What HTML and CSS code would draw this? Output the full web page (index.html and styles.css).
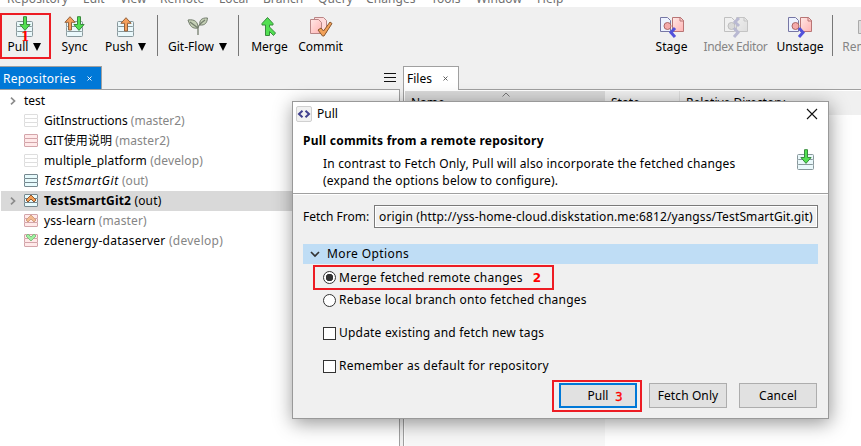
FILE: index.html
```html
<!DOCTYPE html>
<html lang="en">
<head>
<meta charset="utf-8">
<title>Pull</title>
<link rel="stylesheet" href="styles.css">
</head>
<body>
<svg class="defs" width="0" height="0" aria-hidden="true">
  <defs>
    <linearGradient id="pink" x2="1" y2="1"><stop stop-color="#ffe8e6"/><stop offset="1" stop-color="#ffb3b3"/></linearGradient>
    <symbol id="stack" viewBox="0 0 22 22">
      <g fill="#eaf8fb" stroke="#87979b"><rect x="2.500" y="5.500" width="16" height="6" rx="1"/><rect x="2.500" y="10.500" width="16" height="6" rx="1"/><rect x="2.500" y="15.500" width="16" height="5" rx="1"/></g>
    </symbol>
    <symbol id="down" viewBox="0 0 12 16"><path d="M4.500.7h3v7.800h3.600L6 14.400.9 8.500h3.600z" fill="#52e052" stroke="#388a3d"/></symbol>
    <symbol id="up" viewBox="0 0 12 16"><path d="M4.500 14h3V6.300h3.600L6 .7.900 6.300h3.600z" fill="#f5a05c" stroke="#94623c"/></symbol>
    <symbol id="pull" viewBox="0 0 22 22"><use href="#stack" width="22" height="22"/><use href="#down" x="5" width="12" height="16"/></symbol>
    <symbol id="pages" viewBox="0 0 26 22">
      <path d="M1.500 1.500h7l3 3v11h-10z" fill="#edf2ff" stroke="#7777a5"/><path d="M13.500 1.500h8l3 3v11h-11z" fill="url(#pink)" stroke="#b87575"/><path d="M21 1v4h4" fill="none" stroke="#b87575"/><circle cx="8.500" cy="10" r="3.500" fill="#f5aaaa" stroke="#a66"/>
    </symbol>
    <symbol id="repo" viewBox="0 0 16 14"><rect x="1.500" y=".5" width="13" height="4" rx=".5"/><rect x="1.500" y="4.500" width="13" height="4" rx=".5"/><rect x="1.500" y="8.500" width="13" height="4" rx=".5"/></symbol>
  </defs>
</svg>
<div class="app">
  <nav class="menu"><span class="m1">Repository</span><span class="m2">Edit</span><span class="m3">View</span><span class="m4">Remote</span><span class="m5">Local</span><span class="m6">Branch</span><span class="m7">Query</span><span class="m8">Changes</span><span class="m9">Tools</span><span class="m10">Window</span><span class="m11">Help</span></nav>
  <header class="toolbar">
    <div class="tool pull marked"><svg width="22" height="22"><use href="#pull"/></svg><span>Pull <i class="caret"></i></span><b class="mark one">1</b></div>
    <div class="tool sync"><svg width="22" height="22"><use href="#stack"/><use href="#up" x="0" y="0" width="12" height="16"/><use href="#down" x="9" y="0" width="12" height="16"/></svg><span>Sync</span></div>
    <div class="tool push"><svg width="22" height="22"><use href="#stack"/><use href="#up" x="5" y="1" width="12" height="16"/></svg><span>Push <i class="caret"></i></span></div>
    <div class="rule"></div>
    <div class="tool flow"><svg width="22" height="22" fill="#c4cfb5" stroke="#737d6d"><path d="M1 4c7-1 10 2 10 8C5 13 3 10 1 4z"/><path d="M20.500 2c-6-.5-8.500 2.500-7.500 7 5 .5 7-2 7.500-7z"/><path d="M3 6l8 6v7m0-7q0-3 7-8" fill="none" stroke-width="1.300"/></svg><span>Git-Flow <i class="caret"></i></span></div>
    <div class="rule"></div>
    <div class="tool merge"><svg width="22" height="22"><path d="M6.500 19.500V9H3v-1.500L8.500 1.500l5.500 6V9h-3.500v2l6 6-2 2.500-4-4v4z" fill="#52e052" stroke="#388a3d"/></svg><span>Merge</span></div>
    <div class="tool commit"><svg width="24" height="22"><path d="M5.500 1.500h9l3 3v12h-12z" fill="#ffdada" stroke="#b98686"/><path d="M1.500 3.500h8l3 3v11h-11z" fill="url(#pink)" stroke="#b98686"/><path d="M9 14l3-2 2.500 3L21 6l2 1.500L15 20h-1.500z" fill="#f2a158" stroke="#87572f"/></svg><span>Commit</span></div>
    <div class="spring"></div>
    <div class="tool stage"><svg width="26" height="22"><use href="#pages"/><path d="M16 12l-4 4.500 4 4.500" fill="none" stroke="#5252db" stroke-width="3"/></svg><span>Stage</span></div>
    <div class="tool index off"><svg width="26" height="22"><g class="gray"><use href="#pages"/></g><path d="M16 2l-4 4 4 4M11 12l4 4.500-4 4.500" fill="none" stroke="#b9b9d2" stroke-width="3"/></svg><span>Index Editor</span></div>
    <div class="tool unstage"><svg width="26" height="22"><use href="#pages"/><path d="M12 12l4 4.500-4 4.500" fill="none" stroke="#5252db" stroke-width="3"/></svg><span>Unstage</span></div>
    <div class="rule"></div>
    <div class="tool remove off"><svg width="26" height="22"><path d="M4.500 4.500h14v13h-14z" fill="#ddd" stroke="#aaa"/></svg><span>Remove</span></div>
  </header>
  <main class="panes">
    <section class="repos">
      <div class="strip"><div class="tab active"><span>Repositories</span><svg width="5" height="5"><path d="M.5.500l4 4m0-4l-4 4" stroke="#fff" stroke-width=".9"/></svg></div><svg class="burger" width="12" height="10"><path d="M0 .5h12M0 4.500h12M0 8.500h12" stroke="#111"/></svg></div>
      <div class="tree">
        <div class="row top"><svg class="exp" width="6" height="8"><path d="M1 .7L4.500 4 1 7.300"/></svg><span class="r0">test</span></div>
        <div class="row"><svg class="ic pale"><use href="#repo"/></svg><span class="r1">GitInstructions <em>(master2)</em></span></div>
        <div class="row"><svg class="ic rose"><use href="#repo"/></svg><span class="r2">GIT使用说明 <em>(master2)</em></span></div>
        <div class="row"><svg class="ic pale"><use href="#repo"/></svg><span class="r3">multiple_platform <em>(develop)</em></span></div>
        <div class="row"><svg class="ic aqua"><use href="#repo"/></svg><span class="r4"><i>TestSmartGit</i> <em>(out)</em></span></div>
        <div class="row sel"><svg class="exp" width="6" height="8"><path d="M1 .7L4.500 4 1 7.300"/></svg><svg class="ic aqua"><use href="#repo"/><path d="M3 6l5-5 5 5-2 2-3-3-3 3z" fill="#f39b50" stroke="#8e5933"/></svg><span class="r5"><b>TestSmartGit2</b> (out)</span></div>
        <div class="row"><svg class="ic rose"><use href="#repo"/><path d="M3 6l5-5 5 5-2 2-3-3-3 3z" fill="#f2ba91" stroke="#d0a083"/></svg><span class="r6">yss-learn <em>(master)</em></span></div>
        <div class="row"><svg class="ic rose"><use href="#repo"/><path d="M3 2l2-2 3 3 3-3 2 2-5 5z" fill="#a0f0a0" stroke="#84bd84"/></svg><span class="r7">zdenergy-dataserver <em>(develop)</em></span></div>
      </div>
    </section>
    <section class="files">
      <div class="strip"><div class="tab"><span>Files</span><svg width="5" height="5"><path d="M.5.500l4 4m0-4l-4 4" stroke="#555" stroke-width=".9"/></svg></div></div>
      <div class="table">
        <div class="col name"><div class="head">Name<svg width="8" height="5"><path d="M.5 4.500L4 1l3.500 3.500" fill="none" stroke="#777"/></svg></div></div>
        <div class="col state"><div class="head">State</div></div>
        <div class="col dir"><div class="head">Relative Directory</div></div>
      </div>
    </section>
  </main>
</div>
<div class="dialog" role="dialog">
  <div class="intro">
    <div class="title"><svg width="16" height="16"><rect x=".5" y=".5" width="15" height="15" rx="1.500" fill="#f1f1f1" stroke="#d0d0d0"/><path d="M6.500 4.800L3 8l3.500 3.200M9.500 4.800L13 8l-3.500 3.200" fill="none" stroke="#40408e" stroke-width="2"/></svg><span>Pull</span><svg class="close" width="12" height="12"><path d="M1 1l10 10M11 1L1 11" stroke="#111" stroke-width="1.100"/></svg></div>
    <h1><span>Pull commits from a remote repository</span></h1>
    <div class="desc"><p><span class="d1">In contrast to Fetch Only, Pull will also incorporate the fetched changes</span><br><span class="d2">(expand the options below to configure).</span></p><svg width="22" height="22"><use href="#pull"/></svg></div>
  </div>
  <div class="content">
    <div class="from"><label>Fetch From:</label><div class="field"><span>origin (http://yss-home-cloud.diskstation.me:6812/yangss/TestSmartGit.git)</span></div></div>
    <div class="more"><svg width="10" height="7"><path d="M1 1l4 4 4-4" fill="none" stroke="#333" stroke-width="1.700"/></svg><span>More Options</span></div>
    <div class="choice first"><i class="radio on"></i><span class="c1">Merge fetched remote changes</span><b class="mark">2</b></div>
    <div class="choice"><i class="radio"></i><span class="c2">Rebase local branch onto fetched changes</span></div>
    <div class="choice check"><i class="box"></i><span class="c3">Update existing and fetch new tags</span></div>
    <div class="choice check"><i class="box"></i><span class="c4">Remember as default for repository</span></div>
    <div class="buttons"><div class="primary"><button class="default">Pull</button><b class="mark three">3</b></div><button class="fetch">Fetch Only</button><button class="cancel">Cancel</button></div>
  </div>
</div>
</body>
</html>
```
FILE: styles.css
```css
* { box-sizing: border-box; }
body { margin: 0; width: 861px; height: 446px; overflow: hidden; background: #f0f0f0; color: #000; font: 12px/16px "Noto Sans", "Noto Sans CJK SC", sans-serif; }
svg { display: block; flex: none; overflow: visible; }
.defs { position: absolute; }
.app { width: 861px; height: 446px; display: flex; flex-direction: column; overflow: hidden; }
.menu { height: 7px; flex: none; background: #fff; color: #707070; display: flex; align-items: flex-end; padding-left: 7px; overflow: hidden; white-space: nowrap; }
.menu span { flex: none; height: 16px; letter-spacing: .07px; }
.m1 { width: 76px; } .m2 { width: 37px; } .m3 { width: 40px; } .m4 { width: 59px; } .m5 { width: 44px; } .m6 { width: 55px; } .m7 { width: 48px; } .m8 { width: 65px; } .m9 { width: 45px; } .m10 { width: 61px; }
.toolbar { height: 59px; flex: none; display: flex; align-items: flex-start; padding-top: 6px; overflow: hidden; white-space: nowrap; }
.tool { position: relative; flex: none; height: 46px; padding-top: 3px; display: flex; flex-direction: column; align-items: center; }
.tool span { margin-top: 1px; }
.marked { border: 2px solid #ed1c24; padding-top: 1px; }
.marked svg { margin-left: -1px; }
.marked span { margin-left: -3px; }
.caret { display: inline-block; border: 4px solid transparent; border-top: 8px solid #000; border-bottom: 0; margin-left: 2px; }
.marked .caret { margin-left: 1px; }
.pull { width: 51px; } .sync { width: 47px; } .push { width: 55px; margin-right: 4px; } .flow { width: 79px; margin-right: 1px; } .merge { width: 61px; } .commit { width: 41px; }
.stage { width: 43px; } .index { width: 85px; } .index span { letter-spacing: -.4px; } .unstage { width: 44px; margin-right: 10px; } .remove { width: 46px; margin-left: 9px; margin-right: -27px; }
.remove svg { margin-left: 4px; }
.spring { flex: 1; }
.rule { width: 1px; height: 41px; margin-top: 2px; background: #777; flex: none; }
.off { color: #858585; }
.gray { filter: grayscale(1); opacity: .4; }
.mark { font: bold 12px/16px "DejaVu Sans", sans-serif; color: #f00; letter-spacing: 0; }
.one { position: absolute; left: 19px; top: 14px; font-family: "DejaVu Serif", serif; }
.panes { flex: 1; display: flex; min-height: 0; }
.repos { width: 400px; display: flex; flex-direction: column; }
.files { flex: 1; margin-left: 3px; display: flex; flex-direction: column; }
.strip { height: 24px; flex: none; display: flex; border-bottom: 1px solid #a0a0a0; }
.tab { width: 56px; height: 24px; display: flex; align-items: center; background: #fff; border: 1px solid #a0a0a0; border-bottom: 0; padding-left: 3px; }
.tab svg { margin-left: 11px; }
.active { width: 102px; height: 23px; background: #0078d7; color: #fff; border-left: 0; padding-top: 1px; }
.active span { letter-spacing: .25px; }
.burger { margin: 7px 0 0 282px; }
.tree { flex: 1; background: #fff; border-right: 1px solid #a0a0a0; padding-top: 1px; }
.row { height: 20px; display: flex; align-items: center; padding-left: 23px; white-space: nowrap; }
.row em { font-style: normal; color: #858585; }
.top { padding-left: 10px; }
.sel { background: #d9d9d9; margin-left: 1px; padding-left: 9px; }
.exp { fill: none; stroke: #8b8b8b; stroke-width: 1.700; }
.top .exp { margin-right: 8px; }
.sel .exp { margin-right: 7px; }
.ic { width: 16px; height: 14px; margin-right: 5px; }
.r2 { letter-spacing: .08px; } .r3 { letter-spacing: .12px; } .r4 i { letter-spacing: .6px; } .r5 { letter-spacing: .17px; } .r6 { letter-spacing: .12px; } .r7 { letter-spacing: .26px; }
.pale { fill: #fff; stroke: #dedede; } .rose { fill: #ffe9e9; stroke: #d3a5aa; } .aqua { fill: #e6fafc; stroke: #76888f; }
.table { flex: 1; display: flex; border-left: 1px solid #a0a0a0; padding: 1px 0 0 1px; background: #fff; white-space: nowrap; }
.head { height: 24px; padding: 4px 0 0 6px; background: #f0f0f0; position: relative; }
.name { width: 200px; background: #f7f7f7; } .name .head { background: #d9d9d9; }
.head svg { position: absolute; left: 97px; top: 1px; }
.state { width: 75px; } .state .head { border-right: 1px solid #ddd; } .dir { flex: 1; }
.dialog { position: absolute; left: 292px; top: 101px; width: 537px; height: 318px; border: 1px solid #999; background: #f0f0f0; box-shadow: 1px 4px 18px rgba(0,0,0,.42); display: flex; flex-direction: column; white-space: nowrap; }
.intro { height: 92px; background: #fff; border-bottom: 1px solid #a0a0a0; flex: none; }
.title { height: 24px; display: flex; align-items: center; padding: 0 10px 0 3px; gap: 5px; }
.close { margin-left: auto; }
h1 { margin: 7px 0 0 10px; font: bold 12px/16px "Noto Sans", sans-serif; letter-spacing: .24px; }
.desc { display: flex; justify-content: space-between; padding: 6px 11px 0 30px; letter-spacing: .18px; }
.desc p { margin: 0; line-height: 17px; }
.desc svg { margin-top: -6px; }
.content { padding: 10px 10px 0; border-top: 1px solid #fff; }
.from { display: flex; align-items: center; height: 23px; }
.from label { width: 71px; }
.field { width: 444px; height: 23px; border: 1px solid #7a7a7a; box-shadow: inset 0 0 0 1px #fff; padding: 3px 4px; letter-spacing: .14px; }
.more { margin-top: 16px; height: 20px; background: #bfddf5; display: flex; align-items: center; padding-left: 7px; gap: 7px; letter-spacing: .4px; }
.choice { height: 20px; display: flex; align-items: center; padding-left: 20px; letter-spacing: .25px; }
.first { height: 25px; width: 241px; margin: 1px 0 0 10px; border: 2px solid #ed1c24; padding-left: 8px; }
.check { margin-top: 13px; }
.c3 { letter-spacing: .2px; }
.radio, .box { width: 13px; height: 13px; flex: none; border: 1px solid #333; background: #fff; margin-right: 3px; }
.radio { border-radius: 50%; }
.on { background: radial-gradient(circle, #333 0 3.500px, #fff 4px); }
.first .mark { margin-left: 10px; }
.buttons { margin: 4px -3px 0 249px; display: flex; align-items: flex-start; }
.primary { width: 90px; height: 32px; border: 2px solid #ed1c24; padding: 1px 0 0 5px; position: relative; }
button { width: 78px; height: 25px; border: 1px solid #adadad; background: #e1e1e1; color: #000; font: inherit; padding: 0; }
.default { border: 2px solid #0078d7; display: block; }
.fetch { margin: 3px 0 0 7px; letter-spacing: .1px; } .cancel { margin: 3px 0 0 12px; letter-spacing: .1px; }
.three { position: absolute; left: 61px; top: 7px; font-weight: normal; -webkit-text-stroke: .3px #f00; }
```
